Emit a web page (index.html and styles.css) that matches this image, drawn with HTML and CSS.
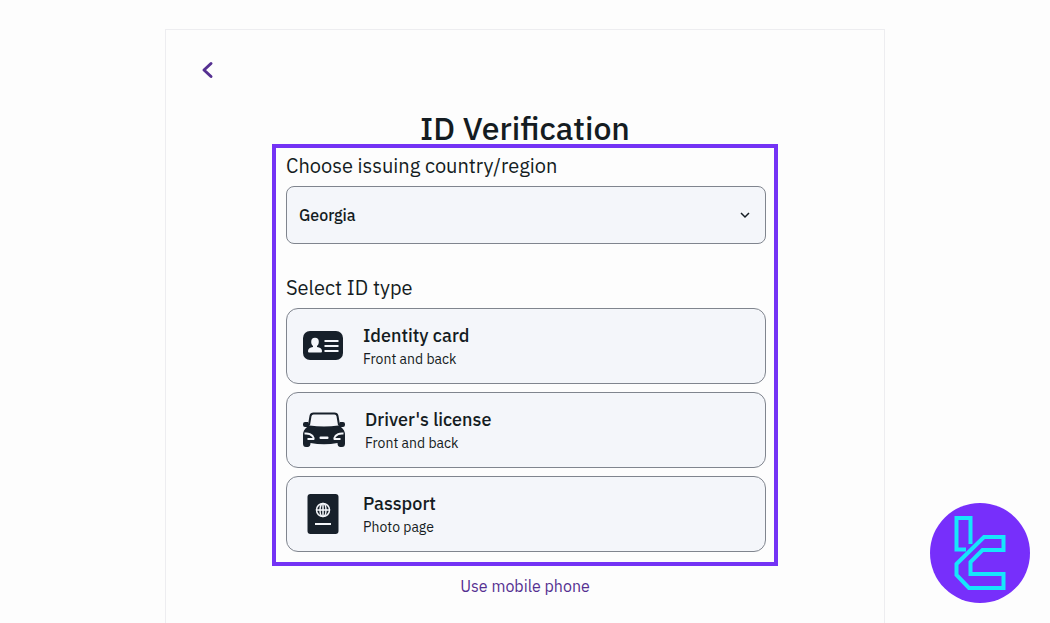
FILE: index.html
```html
<!DOCTYPE html>
<html lang="en">
<head>
  <meta charset="UTF-8" />
  <meta name="viewport" content="width=device-width, initial-scale=1" />
  <title>ID Verification</title>
  <link rel="stylesheet" href="styles.css">
</head>
<body>
  <main class="card">
    <button class="back" type="button" aria-label="Back">
      <svg viewBox="0 0 24 24" width="24" height="24"><path d="M17 5.500 10 12l7 6.500" /></svg>
    </button>

    <h1>ID Verification</h1>

    <form class="panel">
      <label class="heading" for="country">Choose issuing country/region</label>
      <div class="select-wrap">
        <select id="country">
          <option>Georgia</option>
        </select>
        <svg class="chevron" viewBox="0 0 16 16" width="16" height="16"><path d="M4 6l4 4 4-4" /></svg>
      </div>

      <h2 class="heading">Select ID type</h2>
      <div class="options">
        <button class="option" type="button">
          <svg class="icon" viewBox="0 0 40 40" width="40" height="40">
            <rect class="dark" x="0" y="5" width="40" height="29" rx="7" />
            <ellipse class="light" cx="12" cy="16" rx="3.800" ry="4.200" />
            <path class="light" d="M10 18h4v3c3 .5 5 1.500 5 4 0 1-.5 1.500-1.500 1.500h-11C5.500 26.500 5 26 5 25 5 22.500 7 21.500 10 21z" />
            <path class="line" d="M21.500 15H35.500M21.500 20H35.500M21.500 25H35.500" />
          </svg>
          <span class="text">
            <span class="name">Identity card</span>
            <span class="note">Front and back</span>
          </span>
        </button>

        <button class="option" type="button">
          <svg class="icon" viewBox="0 0 42 40" width="42" height="40">
            <path class="roof" d="M6 15 7.500 6Q8 3.500 10.500 3.500H31.500Q34 3.500 34.500 6L36 15" />
            <path class="dark" d="M0 14Q0 12 2 12H5L6.500 15.500Q21 17.500 35.500 15.500L37 12H40Q42 12 42 14V15Q42 17 40 17H38Q42 20 42 25V33.500Q42 37 39 37H37.500Q34.500 37 34.500 33Q21 35.500 7.500 33Q7.500 37 4.500 37H3Q0 37 0 33.500V25Q0 20 4 17H2Q0 17 0 15z" />
            <path class="lamp" d="M1.500 23.500Q7 23 9.500 26Q11 28 10.500 29H4.500M40.500 23.500Q35 23 32.500 26Q31 28 31.500 29H37.500" />
            <rect class="light" x="16.500" y="26.500" width="9" height="2.500" rx="1" />
          </svg>
          <span class="text">
            <span class="name">Driver's license</span>
            <span class="note">Front and back</span>
          </span>
        </button>

        <button class="option" type="button">
          <svg class="icon" viewBox="0 0 40 40" width="40" height="40">
            <rect class="dark" x="4.500" y="0" width="31" height="40" rx="3" />
            <g class="globe">
              <circle cx="20" cy="16" r="6.500" />
              <ellipse cx="20" cy="16" rx="3" ry="6.500" />
              <path d="M13.500 16h13M20 9.500v13" />
            </g>
            <path class="line" d="M12 30H28" />
          </svg>
          <span class="text">
            <span class="name">Passport</span>
            <span class="note">Photo page</span>
          </span>
        </button>
      </div>
    </form>

    <a class="mobile-link" href="#">Use mobile phone</a>
  </main>

  <svg class="logo" viewBox="0 0 100 100" width="100" height="100" role="img" aria-label="Logo">
    <circle cx="50" cy="50" r="50" />
    <path d="M40.500 41V15H26.500V46.500H36" />
    <path d="M26.500 61 54 34H73.500V47H52.500L40.500 59V71H73.500V85H39L26.500 72z" />
  </svg>
</body>
</html>
```
FILE: styles.css
```css
* {
  box-sizing: border-box;
}

body {
  margin: 0;
  min-height: 100vh;
  padding-top: 29px;
  display: flex;
  justify-content: center;
  background: #fdfdfd;
  color: #141c22;
  font-family: "IBM Plex Sans", "Noto Sans", sans-serif;
}

button,
select {
  font: inherit;
  color: inherit;
  cursor: pointer;
}

.card {
  width: 100%;
  max-width: 720px;
  padding: 28px 28px 0;
  border: 1px solid #ededf0;
  border-bottom: none;
  display: flex;
  flex-direction: column;
  align-items: center;
}

.back {
  align-self: flex-start;
  padding: 0;
  border: none;
  background: none;
  line-height: 0;
}

.back path {
  fill: none;
  stroke: #553091;
  stroke-width: 3;
  stroke-linecap: round;
  stroke-linejoin: round;
}

h1 {
  margin: 30px 0 0;
  font-size: 32px;
  font-weight: 500;
  line-height: 32px;
}

.panel {
  width: 100%;
  max-width: 506px;
  padding: 6px 8px 10px 10px;
  border: 4px solid #7433f5;
}

.heading {
  display: block;
  margin: 0 0 8px;
  font-size: 20px;
  font-weight: 400;
  line-height: 24px;
}

.select-wrap {
  display: grid;
  align-items: center;
  margin-bottom: 32px;
}

.select-wrap > * {
  grid-area: 1 / 1;
}

select {
  width: 100%;
  height: 58px;
  padding: 0 12px;
  border: 1px solid #80858e;
  border-radius: 8px;
  background: #f4f6fa;
  appearance: none;
  font-size: 16px;
  font-weight: 500;
}

.chevron {
  justify-self: end;
  margin-right: 13px;
  pointer-events: none;
  fill: none;
  stroke: #141c22;
  stroke-width: 1.5;
}

.options {
  display: grid;
  gap: 8px;
}

.option {
  display: flex;
  align-items: center;
  gap: 20px;
  height: 76px;
  padding: 0 16px;
  border: 1px solid #80858e;
  border-radius: 12px;
  background: #f4f6fa;
  text-align: left;
}

.text {
  display: grid;
}

.name {
  font-size: 18px;
  font-weight: 500;
  line-height: 26px;
}

.note {
  font-size: 14px;
  line-height: 20px;
}

.dark {
  fill: #17202a;
}

.light {
  fill: #f4f6fa;
}

.line,
.lamp {
  fill: none;
  stroke: #f4f6fa;
  stroke-width: 2;
}

.roof {
  fill: none;
  stroke: #17202a;
  stroke-width: 2;
}

.globe {
  fill: none;
  stroke: #f4f6fa;
  stroke-width: 1.5;
}

.mobile-link {
  margin-top: 8px;
  color: #553091;
  font-size: 16px;
  line-height: 24px;
  text-decoration: none;
}

.logo {
  position: fixed;
  right: 20px;
  bottom: 20px;
}

.logo circle {
  fill: #772ffb;
}

.logo path {
  fill: none;
  stroke: #16e6fb;
  stroke-width: 4;
}
```
